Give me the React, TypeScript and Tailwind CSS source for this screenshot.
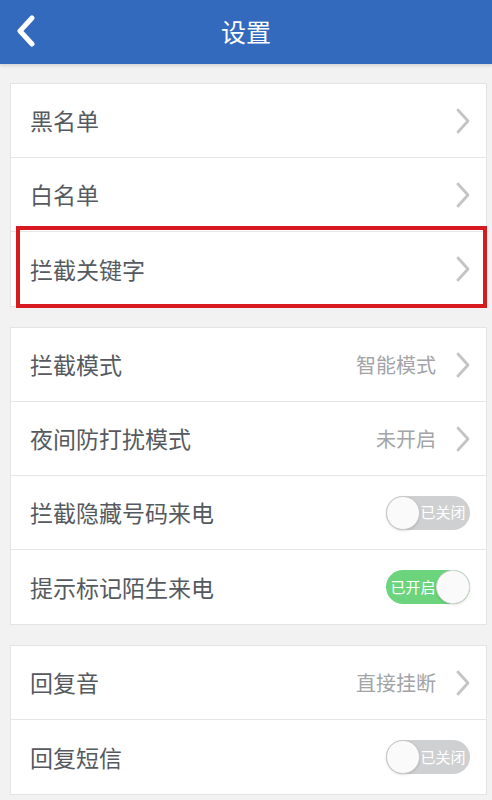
import type { ReactNode } from "react";

const Chevron = () => (
  <svg width="14" height="26" viewBox="0 0 14 26" className="shrink-0">
    <path d="M2 2 L12 13 L2 24" fill="none" stroke="#c4c4c4" strokeWidth="2.8" strokeLinecap="round" strokeLinejoin="round" />
  </svg>
);

const Toggle = ({ on }: { on: boolean }) => {
  if (on) {
    return (
      <div className="flex items-center w-[84px] h-[34px] rounded-full bg-[#6bd47c]">
        <span className="flex-1 text-center text-[15px] text-white pl-1">已开启</span>
        <div className="w-[34px] h-[34px] rounded-full bg-[#fafafa] border border-[#d8d8d8] shadow-sm" />
      </div>
    );
  }
  return (
    <div className="flex items-center w-[84px] h-[34px] rounded-full bg-[#cfd0d2]">
      <div className="w-[34px] h-[34px] rounded-full bg-[#fafafa] border border-[#c8c8c8] shadow-sm" />
      <span className="flex-1 text-center text-[15px] text-white pr-1">已关闭</span>
    </div>
  );
};

type RowProps = {
  label: string;
  value?: string;
  right?: ReactNode;
  last?: boolean;
  highlight?: boolean;
};

const Row = ({ label, value, right, last, highlight }: RowProps) => (
  <div className={`relative flex items-center h-[74px] pl-[19px] pr-[16px] ${last ? "" : "border-b border-[#e6e6e6]"}`}>
    <span className="flex-1 text-[23px] text-[#555a60]">{label}</span>
    {value && <span className="text-[20px] text-[#a2a4a6] mr-5">{value}</span>}
    {right ?? <Chevron />}
    {highlight && (
      <div className="absolute left-[5px] -right-px -top-[6px] -bottom-[2px] border-4 border-[#d71a1f]" />
    )}
  </div>
);

const Card = ({ children }: { children: ReactNode }) => (
  <div className="ml-[10px] mr-[5px] bg-white border border-[#e4e4e4]">{children}</div>
);

export default function App() {
  return (
    <div
      className="w-[492px] h-[800px] overflow-hidden bg-[#f2f2f2]"
      style={{ fontFamily: '"Noto Sans CJK SC", "Noto Sans", sans-serif' }}
    >
      <header className="relative flex items-center justify-center h-[64px] bg-[#336abd] shadow-[0_2px_3px_rgba(0,0,0,0.12)]">
        <svg width="22" height="32" viewBox="0 0 22 32" className="absolute left-[15px] top-[15px]">
          <path d="M17 3 L5 16 L17 29" fill="none" stroke="#ffffff" strokeWidth="5" strokeLinecap="round" strokeLinejoin="round" />
        </svg>
        <h1 className="text-[25px] text-white">设置</h1>
      </header>

      <div className="flex flex-col gap-5 pt-[19px]">
        <Card>
          <Row label="黑名单" />
          <Row label="白名单" />
          <Row label="拦截关键字" last highlight />
        </Card>
        <Card>
          <Row label="拦截模式" value="智能模式" />
          <Row label="夜间防打扰模式" value="未开启" />
          <Row label="拦截隐藏号码来电" right={<Toggle on={false} />} />
          <Row label="提示标记陌生来电" right={<Toggle on />} last />
        </Card>
        <Card>
          <Row label="回复音" value="直接挂断" />
          <Row label="回复短信" right={<Toggle on={false} />} last />
        </Card>
      </div>
    </div>
  );
}
